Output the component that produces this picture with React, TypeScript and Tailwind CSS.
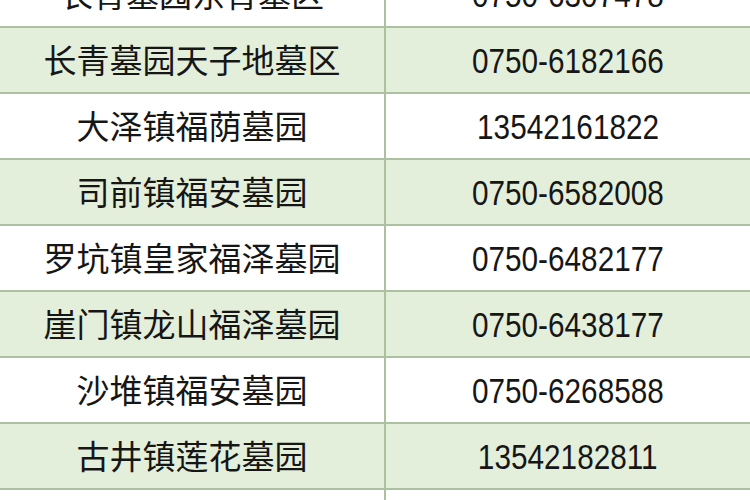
const rows = [
  { name: '长青墓园东青墓区', phone: '0750-6307478' },
  { name: '长青墓园天子地墓区', phone: '0750-6182166' },
  { name: '大泽镇福荫墓园', phone: '13542161822' },
  { name: '司前镇福安墓园', phone: '0750-6582008' },
  { name: '罗坑镇皇家福泽墓园', phone: '0750-6482177' },
  { name: '崖门镇龙山福泽墓园', phone: '0750-6438177' },
  { name: '沙堆镇福安墓园', phone: '0750-6268588' },
  { name: '古井镇莲花墓园', phone: '13542182811' },
  { name: '', phone: '' },
];

export default function App() {
  return (
    <div className="w-[750px] h-[500px] overflow-hidden bg-white">
      <div className="mt-[-38px] flex flex-col">
        {rows.map((r, i) => (
          <div
            key={i}
            className={`flex h-[66px] border-b-2 border-[#adc0a1] ${i % 2 === 1 ? 'bg-[#e3eedb]' : 'bg-white'}`}
          >
            <div
              className="w-[386px] border-r-2 border-[#adc0a1] flex items-center justify-center text-[33px] text-[#161616]"
              style={{ fontFamily: '"Noto Sans CJK SC", sans-serif' }}
            >
              {r.name}
            </div>
            <div className="flex-1 flex items-center justify-center">
              <span
                className="inline-block scale-x-[0.85] text-[35px] text-[#161616] leading-none"
                style={{ fontFamily: '"Liberation Sans", Arial, sans-serif' }}
              >
                {r.phone}
              </span>
            </div>
          </div>
        ))}
      </div>
    </div>
  );
}
